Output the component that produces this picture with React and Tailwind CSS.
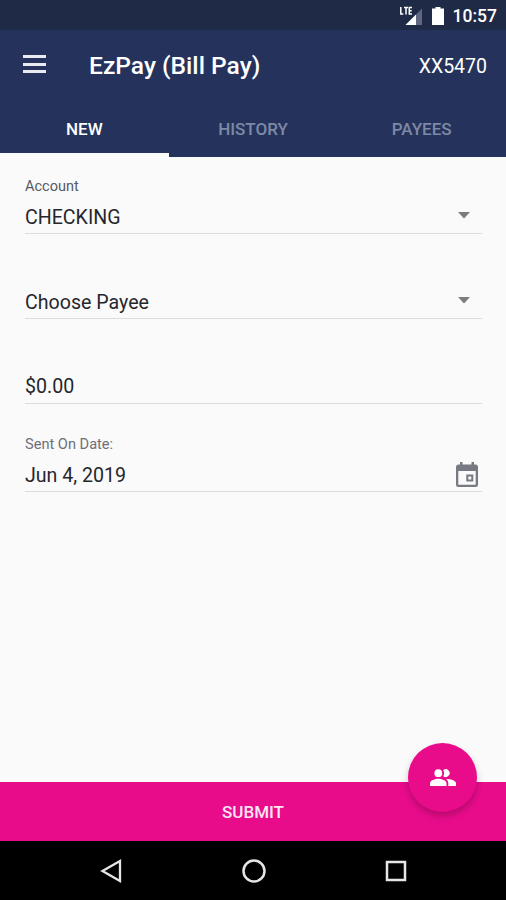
import { useState } from 'react';

const tabs = ['NEW', 'HISTORY', 'PAYEES'];

function StatusBar() {
  return (
    <div className="flex h-[30px] shrink-0 items-center justify-end bg-[#1f2a46] pr-[9px] text-white">
      <svg width="24" height="20" viewBox="0 0 24 20" className="mr-[9px] mt-px">
        <path d="M23 2.500v16.500H6.500z" fill="#5f6780" />
        <path d="M17 8.500v10.500H6.500z" fill="#fff" />
        <path
          d="M1.800 1v7h2.500M5 1.500h4M7 1.500v7M13 1.500h-2.700v6.500H13M10.300 4.700h2.400"
          fill="none"
          stroke="#fff"
          strokeWidth="1.500"
        />
      </svg>
      <svg width="12" height="18" viewBox="0 0 12 18" className="mr-[9px] mt-[2px]">
        <path d="M3.500 0h5v1.500H12V18H0V1.500h3.500z" fill="#fff" />
      </svg>
      <span className="pt-[2px] text-[17.500px] leading-[28px] font-medium">10:57</span>
    </div>
  );
}

function SelectArrow() {
  return (
    <svg width="12" height="7" viewBox="0 0 12 7" className="mr-3 mb-[14px]">
      <path d="M0 0h12L6 6.500z" fill="#7b7c7f" />
    </svg>
  );
}

function CalendarIcon() {
  return (
    <svg width="24" height="26" viewBox="0 0 24 26" className="mr-[3px] mb-[3px]">
      <path
        d="M5 0h2.500v2.500h9V0H19v2.500h1.500A2.500 2.500 0 0 1 23 5v17.500a2.500 2.500 0 0 1-2.500 2.500h-17A2.500 2.500 0 0 1 1 22.500V5a2.500 2.500 0 0 1 2.500-2.500H5zM3.300 9v13.700h17.400V9z"
        fill="#777983"
        fillRule="evenodd"
      />
      <path d="M12.300 13.500h5v5h-5z" fill="none" stroke="#777983" strokeWidth="2" />
    </svg>
  );
}

function PeopleIcon() {
  return (
    <svg width="26" height="18" viewBox="0 0 26 18" fill="#fff">
      <circle cx="8.300" cy="4.200" r="3.900" />
      <path d="M13.200 1.200a3.900 3.900 0 1 1 0 6 5.600 5.600 0 0 0 0-6z" />
      <path d="M0 17v-2.700c0-3 5.200-4.500 8.300-4.500s8.200 1.500 8.200 4.500V17z" />
      <path d="M16 9.900c3.500-.2 10 1.200 10 4.400V17h-7.700v-2.700c0-2-.9-3.400-2.300-4.400z" />
    </svg>
  );
}

function Field({ label, value, className, children }) {
  return (
    <div className={`flex flex-col justify-end border-b border-[#dcdcde] ${className}`}>
      {label}
      <div className="flex h-[31px] items-end justify-between">
        <span className="text-[19.600px] leading-[31px] text-[#26272d]">{value}</span>
        {children}
      </div>
    </div>
  );
}

export default function App() {
  const [active, setActive] = useState('NEW');

  return (
    <div className="flex h-[900px] w-[506px] flex-col overflow-hidden bg-[#fafafa] font-['Roboto',sans-serif]">
      <StatusBar />

      <header className="flex h-[127px] shrink-0 flex-col bg-[#25335c] text-white">
        <div className="flex h-[70px] items-center pr-[19px] pl-[23px]">
          <button type="button" className="mb-[2px] flex h-[18px] w-[23px] flex-col justify-between">
            <span className="h-[3px] w-full bg-[#e9ebf1]" />
            <span className="h-[3px] w-full bg-[#e9ebf1]" />
            <span className="h-[3px] w-full bg-[#e9ebf1]" />
          </button>
          <h1 className="ml-[43px] flex-1 pt-[2px] text-[24.600px] font-medium">EzPay (Bill Pay)</h1>
          <span className="pt-[3px] text-[19.500px]">XX5470</span>
        </div>

        <nav className="grid h-[57px] grid-cols-3">
          {tabs.map((tab) => (
            <button
              key={tab}
              type="button"
              onClick={() => setActive(tab)}
              className={
                active === tab
                  ? 'border-b-4 border-[#fafafa] pt-[7px] text-[17px] font-medium text-white'
                  : 'border-b-4 border-transparent pt-[7px] text-[17px] font-medium text-[#7e89a5]'
              }
            >
              {tab}
            </button>
          ))}
        </nav>
      </header>

      <main className="flex-1 pr-6 pl-[25px]">
        <Field
          className="h-[77px]"
          label={<span className="pb-[5px] text-[14.500px] leading-5 text-[#565963]">Account</span>}
          value="CHECKING"
        >
          <SelectArrow />
        </Field>
        <Field className="h-[85px]" value="Choose Payee">
          <SelectArrow />
        </Field>
        <Field className="h-[85px] pb-px" value="$0.00" />
        <Field
          className="h-[88px]"
          label={<span className="pb-[6px] text-[14.600px] leading-5 text-[#6d7079]">Sent On Date:</span>}
          value="Jun 4, 2019"
        >
          <CalendarIcon />
        </Field>
      </main>

      <div className="relative h-[59px] shrink-0">
        <button
          type="button"
          className="h-full w-full bg-[#e80c8b] pt-[3px] text-[17px] font-medium text-[#ffe6f5]"
        >
          SUBMIT
        </button>
        <button
          type="button"
          className="absolute -top-[39px] right-[29px] flex h-[69px] w-[69px] items-center justify-center rounded-full bg-[#e80c8b] shadow-[0_4px_7px_rgba(0,0,0,0.22)]"
        >
          <PeopleIcon />
        </button>
      </div>

      <div className="flex h-[59px] shrink-0 items-center justify-between bg-black pr-[97px] pl-[98px]">
        <svg width="26" height="26" viewBox="0 0 26 26">
          <path d="M22 3v20L4.500 13z" fill="none" stroke="#e6e6e6" strokeWidth="2.300" />
        </svg>
        <svg width="26" height="26" viewBox="0 0 26 26">
          <circle cx="13" cy="13" r="10.500" fill="none" stroke="#e6e6e6" strokeWidth="2.500" />
        </svg>
        <svg width="26" height="26" viewBox="0 0 26 26">
          <path d="M4 4h18v18H4z" fill="none" stroke="#e6e6e6" strokeWidth="2.500" />
        </svg>
      </div>
    </div>
  );
}
